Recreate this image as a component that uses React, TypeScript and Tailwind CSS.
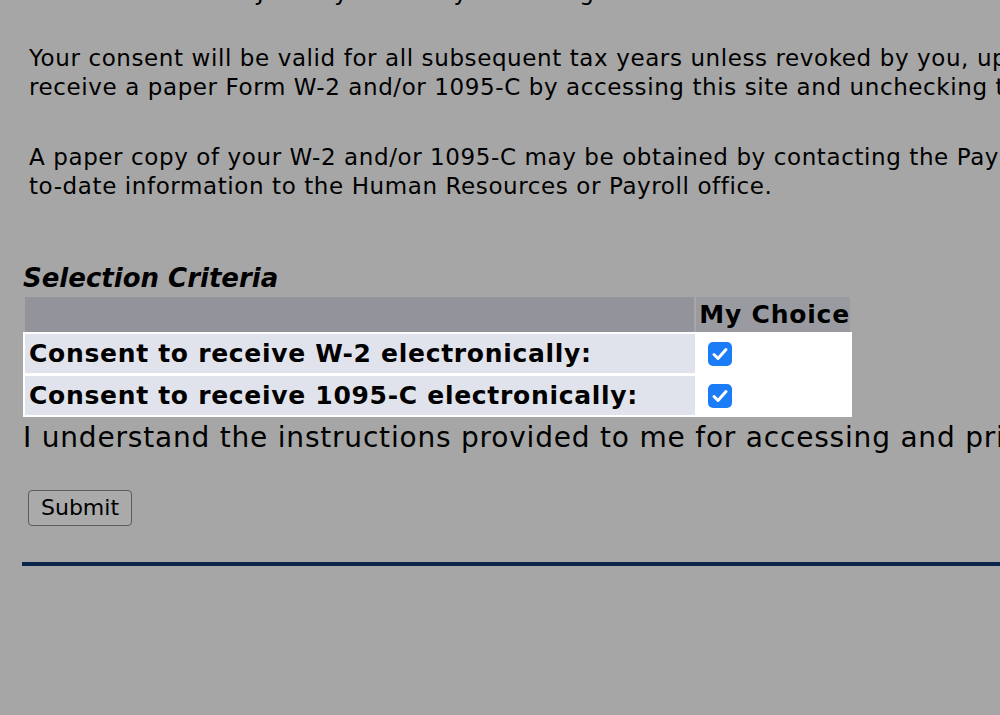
export default function App() {
  const labels = ['Consent to receive W-2 electronically:', 'Consent to receive 1095-C electronically:'];

  return (
    <div className="w-[1000px] h-[715px] overflow-hidden bg-[#a6a6a6] text-black font-['DejaVu_Sans',Verdana,sans-serif]">
      <div className="w-[1500px] whitespace-nowrap">
        {/* previous line, scrolled mostly out of view */}
        <p className="pl-[29px] text-[23px] leading-[29px] tracking-[0.6px] mt-[-22px]">
          Forms available in January of each year through this site.
        </p>

        <p className="pl-[29px] text-[23px] leading-[29px] tracking-[0.6px] mt-[37px]">
          Your consent will be valid for all subsequent tax years unless revoked by you, upon which you will
          <br />
          receive a paper Form W-2 and/or 1095-C by accessing this site and unchecking the consent box.
        </p>

        <p className="pl-[29px] text-[23px] leading-[29px] tracking-[0.6px] mt-[41px]">
          A paper copy of your W-2 and/or 1095-C may be obtained by contacting the Payroll office. Please provide up-
          <br />
          to-date information to the Human Resources or Payroll office.
        </p>

        <div className="pl-[23px] mt-[62px]">
          <h3 className="text-[26px] leading-[30px] font-bold italic">Selection Criteria</h3>

          <div className="w-[829px] mt-[4px]">
            {/* header row */}
            <div className="flex gap-[2px] px-[2px] h-[35px]">
              <div className="w-[670px] bg-[#93949b]" />
              <div className="flex-1 bg-[#9a9ba1] text-[25px] tracking-[0.8px] font-bold leading-[35px] pl-[3px]">My Choice</div>
            </div>

            {/* body rows */}
            <div className="bg-white p-[2px] flex flex-col gap-[3px]">
              {labels.map((label) => (
                <div key={label} className="flex gap-[2px] h-[39px]">
                  <div className="w-[670px] bg-[#e1e3ec] text-[25px] tracking-[0.7px] font-bold leading-[39px] pl-[4px]">{label}</div>
                  <div className="flex-1 bg-white flex items-center pl-[11px]">
                    <span className="w-[24px] h-[24px] rounded-[5px] bg-[#1a7cf6] flex items-center justify-center">
                      <svg width="24" height="24" viewBox="0 0 24 24" fill="none">
                        <path d="M6 12.5 L10 16.5 L18 7.5" stroke="white" strokeWidth="3" strokeLinecap="round" strokeLinejoin="round" />
                      </svg>
                    </span>
                  </div>
                </div>
              ))}
            </div>
          </div>

          <p className="text-[28px] leading-[36px] tracking-[0.8px] mt-[3px]">
            I understand the instructions provided to me for accessing and printing my W-2 and/or 1095-C.
          </p>

          <button className="block mt-[34px] ml-[5px] h-[36px] px-[12px] border-[1.5px] border-[#5a5a5a] rounded-[4px] bg-[#aaaaaa] text-[22px] leading-none">
            Submit
          </button>

          <div className="mt-[36px] h-[4px] bg-[#0b2449] -ml-[1px]" />
        </div>
      </div>
    </div>
  );
}
